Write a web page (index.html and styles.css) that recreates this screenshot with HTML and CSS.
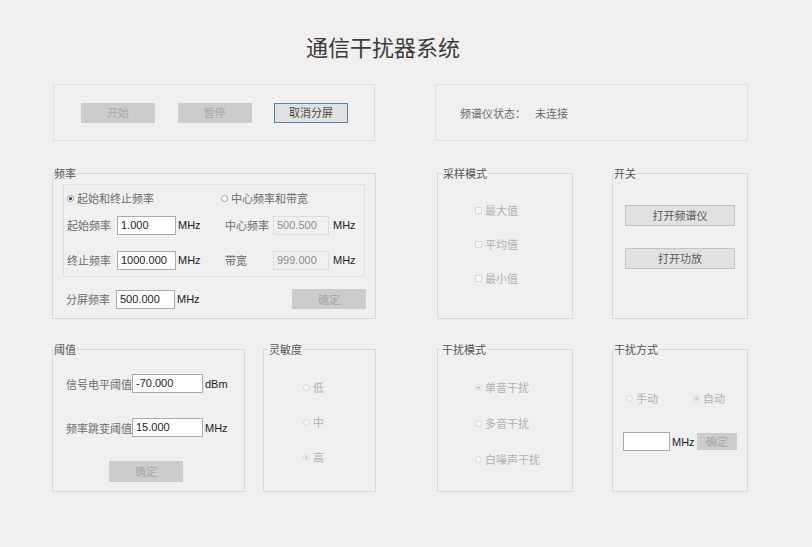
FILE: index.html
```html
<!DOCTYPE html>
<html lang="zh-CN">
<head>
<meta charset="utf-8">
<title>通信干扰器系统</title>
<link rel="stylesheet" href="styles.css">
</head>
<body>
<div class="page">
  <h1 class="title">通信干扰器系统</h1>
  <div class="main">
    <div class="col col-left">
      <div class="topbox topbox-left">
        <span class="btn btn-dis">开始</span>
        <span class="btn btn-dis">暂停</span>
        <span class="btn btn-focus">取消分屏</span>
      </div>
      <div class="row row-1">
        <div class="group g-freq">
          <span class="legend">频率</span>
          <div class="inner">
            <div class="frow frow-r">
              <span class="radio r-first"><i class="rdot on"></i>起始和终止频率</span>
              <span class="radio r-second"><i class="rdot"></i>中心频率和带宽</span>
            </div>
            <div class="frow">
              <span class="flabel">起始频率</span><span class="input w59">1.000</span><span class="unit u1">MHz</span>
              <span class="flabel flabel2">中心频率</span><span class="input w56 dis">500.500</span><span class="unit u2">MHz</span>
            </div>
            <div class="frow frow-3">
              <span class="flabel">终止频率</span><span class="input w59">1000.000</span><span class="unit u1">MHz</span>
              <span class="flabel flabel2">带宽</span><span class="input w56 dis">999.000</span><span class="unit u2">MHz</span>
            </div>
          </div>
          <div class="frow frow-out">
            <span class="flabel">分屏频率</span><span class="input w59">500.000</span><span class="unit u1">MHz</span>
            <span class="btn btn-dis btn-ok">确定</span>
          </div>
        </div>
      </div>
      <div class="row row-2">
        <div class="group g-thr">
          <span class="legend">阈值</span>
          <div class="trow trow-1">
            <span class="tlabel">信号电平阈值</span><span class="input w71">-70.000</span><span class="unit u3">dBm</span>
          </div>
          <div class="trow trow-2">
            <span class="tlabel">频率跳变阈值</span><span class="input w71">15.000</span><span class="unit u3">MHz</span>
          </div>
          <span class="btn btn-dis btn-thr">确定</span>
        </div>
        <div class="group g-sens">
          <span class="legend lg4">灵敏度</span>
          <div class="opts opts-sens">
            <span class="radio dim"><i class="rdot"></i>低</span>
            <span class="radio dim"><i class="rdot"></i>中</span>
            <span class="radio dim"><i class="rdot on"></i>高</span>
          </div>
        </div>
      </div>
    </div>
    <div class="col col-right">
      <div class="topbox topbox-right">
        <span>频谱仪状态：</span><span class="status">未连接</span>
      </div>
      <div class="row row-1 row-r">
        <div class="group g-small">
          <span class="legend lg4">采样模式</span>
          <div class="opts opts-samp">
            <span class="radio dim"><i class="cbox"></i>最大值</span>
            <span class="radio dim"><i class="cbox"></i>平均值</span>
            <span class="radio dim"><i class="cbox"></i>最小值</span>
          </div>
        </div>
        <div class="group g-small g-switch">
          <span class="legend">开关</span>
          <span class="btn btn-on">打开频谱仪</span>
          <span class="btn btn-on">打开功放</span>
        </div>
      </div>
      <div class="row row-2 row-r">
        <div class="group g-small">
          <span class="legend lg3">干扰模式</span>
          <div class="opts opts-mode">
            <span class="radio dim"><i class="rdot on"></i>单音干扰</span>
            <span class="radio dim"><i class="rdot"></i>多音干扰</span>
            <span class="radio dim"><i class="rdot"></i>白噪声干扰</span>
          </div>
        </div>
        <div class="group g-small g-way">
          <span class="legend">干扰方式</span>
          <div class="wrow">
            <span class="radio dim r-manual"><i class="rdot"></i>手动</span>
            <span class="radio dim"><i class="rdot on"></i>自动</span>
          </div>
          <div class="wrow wrow-2">
            <span class="input w47"></span><span class="unit u4">MHz</span><span class="btn btn-dis btn-small">确定</span>
          </div>
        </div>
      </div>
    </div>
  </div>
</div>
</body>
</html>
```
FILE: styles.css
```css
* { box-sizing: border-box; }
html, body { margin: 0; padding: 0; }
body {
  background: #f0f0f0;
  font-family: "Noto Sans CJK SC", "Liberation Sans", sans-serif;
  font-size: 11px;
  color: #6c6c6c;
  width: 812px;
  height: 547px;
  overflow: hidden;
}
.page { padding-top: 31px; }
.title {
  margin: 0;
  padding-left: 306px;
  font-size: 22px;
  line-height: 30px;
  font-weight: normal;
  color: #3c3c3c;
}
.main { display: flex; margin-top: 23px; padding-left: 52px; }
.col { display: flex; flex-direction: column; }
.col-left { width: 324px; }
.col-right { width: 313px; margin-left: 59px; }

.topbox {
  height: 57px;
  border: 1px solid #e0e0e0;
  display: flex;
  align-items: center;
}
.topbox-left { margin: 0 1px; padding-left: 27px; gap: 22.5px; }
.topbox-right { padding-left: 24px; color: #6c6c6c; }
.status { margin-left: 9px; }

.btn {
  display: inline-flex;
  align-items: center;
  justify-content: center;
  width: 74px;
  height: 20px;
  border: 1px solid #cccccc;
  background: #cccccc;
  color: #a8a8a8;
  line-height: 1;
}
.btn-focus { background: #e1e1e1; border: 1px solid #4a86bd; color: #4a4a4a; }
.btn-on { background: #e1e1e1; border: 1px solid #c4c4c4; color: #5a5a5a; width: 110px; height: 21px; }

.row { display: flex; }
.row-1 { margin-top: 32px; height: 146px; }
.row-2 { margin-top: 30px; height: 143px; }
.row-r { padding-left: 2px; gap: 39px; }

.group {
  position: relative;
  border: 1px solid #dadada;
  height: 100%;
}
.legend {
  position: absolute;
  top: -7px;
  left: 0;
  line-height: 12px;
  padding: 0 1px;
  background: #f0f0f0;
  color: #555;
}
.lg4 { left: 4px; }
.lg3 { left: 3px; }

/* frequency */
.g-freq { width: 324px; }
.inner {
  margin: 10px 10px 0 10px;
  height: 93px;
  border: 1px solid #e2e2e2;
  display: flex;
  flex-direction: column;
}
.frow { display: flex; align-items: center; height: 28px; padding-left: 3px; }
.frow-r { height: 26px; }
.frow-3 { margin-top: 7px; }
.frow-out { margin-top: 12px; height: 20px; padding-left: 13px; }
.flabel { width: 50px; }
.flabel2 { width: 48px; }
.input {
  display: inline-flex;
  align-items: center;
  height: 19px;
  padding: 0 0 1px 3px;
  background: #fff;
  border: 1px solid #a9a9a9;
  font-family: "Liberation Sans", sans-serif;
  font-size: 11px;
  color: #222;
}
.input.dis { background: #f0f0f0; border-color: #dcdcdc; color: #8c8c8c; }
.w59 { width: 59px; }
.w56 { width: 56px; }
.w71 { width: 71px; }
.w47 { width: 47px; }
.unit { font-family: "Liberation Sans", sans-serif; font-size: 11px; color: #1a1a1a; }
.u1 { margin-left: 2px; width: 47px; }
.u2 { margin-left: 4px; }
.u3 { margin-left: 2px; }
.u4 { margin-left: 2px; width: 25px; }
.btn-ok { margin-left: auto; margin-right: 9px; }

.radio { display: inline-flex; align-items: center; }
.r-first { width: 154px; }
.rdot {
  position: relative;
  display: inline-block;
  width: 7px;
  height: 7px;
  border-radius: 50%;
  border: 1px solid #9a9a9a;
  background: #fff;
  margin-right: 3px;
}
.rdot.on::after {
  content: "";
  position: absolute;
  left: 1px; top: 1px;
  width: 3px; height: 3px;
  border-radius: 50%;
  background: #333;
}
.dim { color: #b0b0b0; }
.dim .rdot { border-color: #d8d8d8; background: #f7f7f7; }
.dim .rdot.on::after { background: #c4c4c4; }
.cbox {
  display: inline-block;
  width: 7px;
  height: 7px;
  border: 1px solid #d8d8d8;
  background: #f9f9f9;
  margin-right: 3px;
}

/* threshold */
.g-thr { width: 193px; }
.trow { display: flex; align-items: center; height: 19px; padding-left: 13px; }
.trow-1 { margin-top: 24px; }
.trow-2 { margin-top: 25px; }
.tlabel { width: 66px; }
.btn-thr { display: flex; margin: 24px 0 0 56px; height: 21px; }

/* sensitivity */
.g-sens { width: 113px; margin-left: 18px; }
.opts { display: flex; flex-direction: column; }
.opts .radio { height: 20px; }
.opts-sens { padding: 27px 0 0 39px; gap: 15px; }
.opts-samp { padding: 26px 0 0 37px; gap: 14px; }
.opts-mode { padding: 27px 0 0 37px; gap: 16px; }

.g-small { width: 136px; }
.g-switch { display: flex; flex-direction: column; padding: 31px 0 0 12px; gap: 22px; }

/* interference way */
.wrow { display: flex; align-items: center; height: 20px; margin-top: 38px; padding-left: 13px; }
.r-manual { width: 67px; }
.wrow-2 { margin-top: 24px; padding-left: 10px; height: 19px; }
.btn-small { width: 40px; height: 17px; }
```
